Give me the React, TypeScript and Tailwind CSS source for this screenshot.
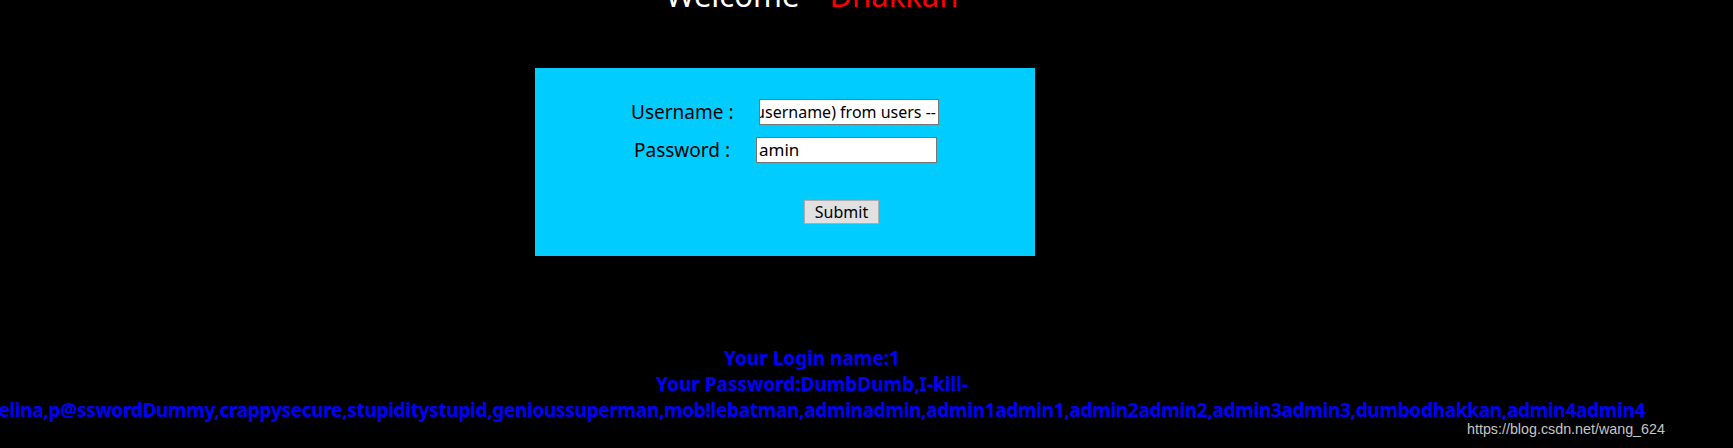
import React from "react";

const longLine =
  "youAngelina,p@sswordDummy,crappysecure,stupiditystupid,genioussuperman,mob!lebatman,adminadmin,admin1admin1,admin2admin2,admin3admin3,dumbodhakkan,admin4admin4";

export default function App() {
  return (
    <div
      className="relative w-[1733px] h-[448px] overflow-hidden bg-black"
      style={{ fontFamily: '"Noto Sans", "Open Sans", sans-serif' }}
    >
      {/* Welcome heading */}
      <div className="w-[1624px] -mt-[25px] h-[40px] text-center text-[31px] leading-[40px] whitespace-nowrap">
        <span className="text-white">Welcome</span>
        <span className="ml-[30px] text-[#ff0000]">Dhakkan</span>
      </div>

      {/* Login box */}
      <div className="ml-[535px] mt-[53px] w-[500px] h-[188px] bg-[#00ccff] text-black">
        <div className="flex items-center pt-[31px] h-[57px]">
          <div className="ml-[96px] w-[128px] text-[19px] leading-[26px] whitespace-nowrap">Username :</div>
          <div className="w-[180px] h-[26px] bg-white border border-[#767676] flex justify-end items-center overflow-hidden pr-[2px]">
            <span className="text-[16px] leading-[24px] whitespace-nowrap">
              1' union select 1,group_concat(password,username) from users --
            </span>
          </div>
        </div>
        <div className="flex items-center mt-[12px] h-[26px]">
          <div className="ml-[99px] w-[122px] text-[19px] leading-[26px] whitespace-nowrap">Password :</div>
          <div className="w-[181px] h-[26px] bg-white border border-[#767676] flex items-center overflow-hidden pl-[2px]">
            <span className="text-[17px] leading-[24px] whitespace-nowrap">amin</span>
          </div>
        </div>
        <div className="flex mt-[37px]">
          <div className="ml-[269px] w-[75px] h-[24px] bg-[#e1e1e1] border border-[#adadad] flex items-center justify-center text-[16px] leading-[22px]">
            Submit
          </div>
        </div>
      </div>

      {/* Result text */}
      <div className="mt-[89px] w-[1624px] text-center text-[#0000ff] font-bold text-[19px] leading-[26px]">
        <div>Your Login name:1</div>
        <div>Your Password:DumbDumb,I-kill-</div>
      </div>
      <div className="w-[1645px] flex justify-end text-[#0000ff] font-bold text-[19px] leading-[26px] tracking-[-0.3px]">
        <div className="whitespace-nowrap shrink-0">{longLine}</div>
      </div>

      {/* Watermark */}
      <div
        className="absolute left-[1467px] top-[420px] text-[#c6c6c6] text-[14.3px] leading-[18px] whitespace-nowrap"
        style={{ fontFamily: '"Liberation Sans", Arial, sans-serif' }}
      >
        https://blog.csdn.net/wang_624
      </div>
    </div>
  );
}
